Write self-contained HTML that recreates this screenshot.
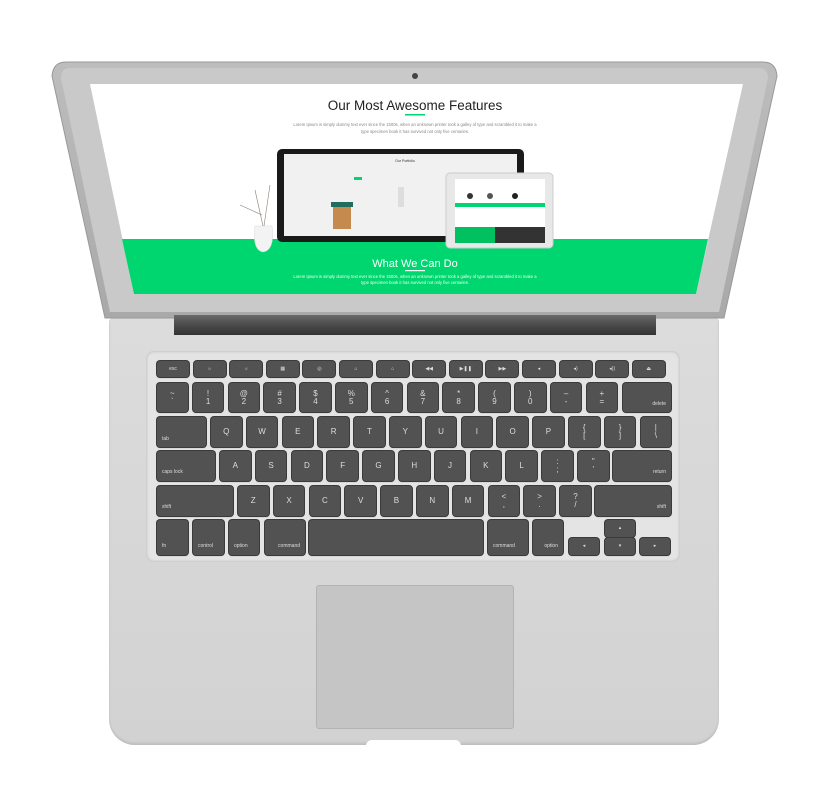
<!DOCTYPE html>
<html><head><meta charset="utf-8"><style>
body{margin:0;width:829px;height:805px;background:#fff;position:relative;overflow:hidden;font-family:"Liberation Sans",sans-serif}
.a{position:absolute}
.k{position:absolute;background:#525252;border-radius:3px;box-shadow:0 0 0 1px #3a3a3a,0 1px 1px #888;color:#ddd;font-size:8px;line-height:1}
.c{display:flex;align-items:center;justify-content:center;text-align:center}
.s{font-size:5px}
</style></head><body>
<!-- base -->
<div class="a" style="left:109px;top:318px;width:610px;height:427px;background:linear-gradient(#dcdcdc,#d6d6d6 60%,#d2d2d2);border-radius:4px 4px 26px 26px;box-shadow:inset 0 -2px 2px #bdbdbd"></div>
<div class="a" style="left:366px;top:740px;width:95px;height:6px;background:#fff;border-radius:6px 6px 0 0"></div>
<!-- keyboard well -->
<div class="a" style="left:146px;top:351px;width:534px;height:211px;background:#e4e4e4;border-radius:8px;box-shadow:inset 0 0 3px #b0b0b0"></div>
<!-- trackpad -->
<div class="a" style="left:316px;top:585px;width:196px;height:142px;background:#c5c5c5;border:1px solid #b3b3b3;border-radius:3px"></div>
<!-- lid -->
<svg class="a" style="left:0;top:0" width="829" height="340">
<defs><linearGradient id="lg" x1="0" x2="0" y1="0" y2="1"><stop offset="0" stop-color="#bdbdbd"/><stop offset="1" stop-color="#a9a9a9"/></linearGradient>
<linearGradient id="hg" x1="0" x2="0" y1="0" y2="1"><stop offset="0" stop-color="#6a6a6a"/><stop offset="0.5" stop-color="#4a4a4a"/><stop offset="1" stop-color="#333"/></linearGradient></defs>
<path d="M66 62 H763 Q776 62 777 76 L724 318 H105 L52 76 Q53 62 66 62Z" fill="url(#lg)" stroke="#999" stroke-width="1"/>
<path d="M70 68 H759 Q768 68 768 78 L719 312 H110 L61 78 Q61 68 70 68Z" fill="#c9c9c9"/>
<polygon points="90,84 743,84 696,294 134,294" fill="#fff"/>
<polygon points="122,239 708,239 696,294 134,294" fill="#00d66f"/>
<circle cx="415" cy="76" r="3" fill="#444"/>
<rect x="174" y="315" width="482" height="20" fill="url(#hg)"/>
<text x="415" y="110" font-size="13.5" text-anchor="middle" fill="#222" font-family="Liberation Sans">Our Most Awesome Features</text>
<rect x="405" y="114" width="20" height="1.5" fill="#00d66f"/>
<text x="415" y="126" font-size="4.2" text-anchor="middle" fill="#888">Lorem Ipsum is simply dummy text ever since the 1500s, when an unknown printer took a galley of type and scrambled it to make a</text>
<text x="415" y="133" font-size="4.2" text-anchor="middle" fill="#888">type specimen book it has survived not only five centuries.</text>
<!-- inner laptop -->
<rect x="277" y="149" width="247" height="93" rx="5" fill="#1a1a1a"/>
<rect x="284" y="154" width="233" height="82" fill="#f1f1f1"/>
<text x="405" y="162" font-size="3.5" text-anchor="middle" fill="#333">Our Portfolio</text>
<rect x="354" y="177" width="8" height="3" fill="#00d66f"/>
<rect x="333" y="204" width="18" height="25" fill="#c48a4e"/><rect x="331" y="202" width="22" height="5" fill="#1e6d5e"/>
<rect x="398" y="187" width="6" height="20" fill="#ddd"/>
<!-- vase -->
<path d="M255 226 Q252 250 263 252 Q275 250 272 226Z" fill="#f3f3f3" stroke="#ddd" stroke-width=".6"/>
<path d="M263 226 L255 190 M264 226 L270 185 M262 215 L240 205" stroke="#8a7f73" stroke-width=".6" fill="none"/>
<!-- tablet -->
<rect x="446" y="173" width="107" height="75" rx="4" fill="#e8e8e8" stroke="#ccc"/>
<rect x="455" y="179" width="90" height="64" fill="#fff"/>
<rect x="455" y="203" width="90" height="4" fill="#00d66f"/>
<rect x="455" y="227" width="40" height="16" fill="#00c060"/><rect x="495" y="227" width="50" height="16" fill="#333"/>
<circle cx="470" cy="196" r="3" fill="#333"/><circle cx="490" cy="196" r="3" fill="#555"/><circle cx="515" cy="196" r="3" fill="#222"/>
<text x="415" y="267" font-size="11" text-anchor="middle" fill="#fff" font-family="Liberation Sans">What We Can Do</text>
<rect x="405" y="270" width="20" height="1.2" fill="#fff"/>
<text x="415" y="278" font-size="4.2" text-anchor="middle" fill="#e8fff2">Lorem Ipsum is simply dummy text ever since the 1500s, when an unknown printer took a galley of type and scrambled it to make a</text>
<text x="415" y="284" font-size="4.2" text-anchor="middle" fill="#e8fff2">type specimen book it has survived not only five centuries.</text>
</svg>
<!-- keys -->
<div id="kb"></div>
<script>
var h='';
function k(x,y,w,ht,t,cls){h+='<div class="k '+(cls||'')+'" style="left:'+x+'px;top:'+y+'px;width:'+w+'px;height:'+ht+'px">'+(t||'')+'</div>';}
var fn=['esc','☼','☼','▦','◎','⌂','⌂','◀◀','▶❚❚','▶▶','◂','◂)','◂))','⏏'];
for(var i=0;i<14;i++)k(157+i*36.6,361,32,16,fn[i],'c s');
var nr=['~<br>`','!<br>1','@<br>2','#<br>3','$<br>4','%<br>5','^<br>6','&amp;<br>7','*<br>8','(<br>9',')<br>0','–<br>-','+<br>='];
for(i=0;i<13;i++)k(157+i*35.8,383,30.5,29,nr[i],'c');
k(623,383,48,29,'<span style="position:absolute;right:5px;bottom:5px" class="s">delete</span>');
k(157,417,49,30,'<span style="position:absolute;left:5px;bottom:5px" class="s">tab</span>');
var q=['Q','W','E','R','T','Y','U','I','O','P','{<br>[','}<br>]','|<br>\\'];
for(i=0;i<13;i++)k(211+i*35.8,417,30.5,30,q[i],'c');
k(157,451,58,30,'<span style="position:absolute;left:5px;bottom:6px" class="s">caps lock</span>');
var a=['A','S','D','F','G','H','J','K','L',':<br>;','"<br>\''];
for(i=0;i<11;i++)k(220+i*35.8,451,30.5,30,a[i],'c');
k(613,451,58,30,'<span style="position:absolute;right:5px;bottom:6px" class="s">return</span>');
k(157,486,76,30,'<span style="position:absolute;left:5px;bottom:6px" class="s">shift</span>');
var z=['Z','X','C','V','B','N','M','&lt;<br>,','&gt;<br>.','?<br>/'];
for(i=0;i<10;i++)k(238+i*35.8,486,30.5,30,z[i],'c');
k(595,486,76,30,'<span style="position:absolute;right:5px;bottom:6px" class="s">shift</span>');
function b(x,w,t,r){k(x,520,w,35,'<span style="position:absolute;'+(r?'right':'left')+':5px;bottom:6px" class="s">'+t+'</span>');}
b(157,31,'fn');b(193,31,'control');b(229,30,'option');b(265,40,'command',1);
k(309,520,174,35,'');
b(488,40,'command');b(533,30,'option',1);
k(569,538,30,17,'◂','c s');k(605,520,30,17,'▴','c s');k(605,538,30,17,'▾','c s');k(640,538,30,17,'▸','c s');
document.getElementById('kb').innerHTML=h;
</script>
</body></html>
